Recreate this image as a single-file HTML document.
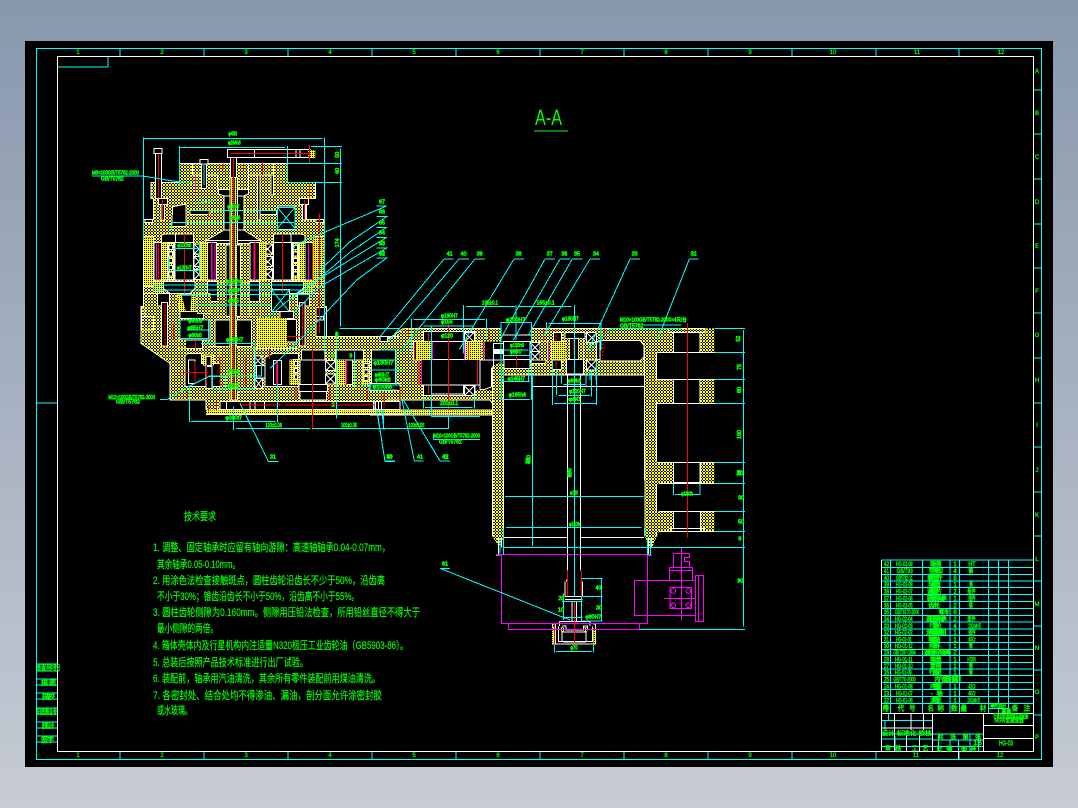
<!DOCTYPE html>
<html lang="zh"><head><meta charset="utf-8"><title>A-A</title>
<style>
html,body{margin:0;padding:0;background:#8a9aae}
body{width:1078px;height:808px;overflow:hidden;background:linear-gradient(#8898ac,#c6cbd4)}
svg{display:block;position:absolute;left:0;top:0}
text{font-family:"Liberation Sans","WenQuanYi Zen Hei","Noto Sans CJK SC",sans-serif}
</style></head><body>
<svg width="1078" height="808" viewBox="0 0 1078 808" shape-rendering="crispEdges" xmlns="http://www.w3.org/2000/svg">
<defs>
<pattern id="H" width="3" height="3" patternUnits="userSpaceOnUse"><rect width="3" height="3" fill="#000"/><rect x="0" y="0" width="1" height="1" fill="#ff0"/><rect x="1" y="1" width="1" height="1" fill="#ff0"/><rect x="2" y="2" width="1" height="1" fill="#ff0"/><rect x="1" y="2" width="1" height="1" fill="#ff0"/><rect x="2" y="1" width="1" height="1" fill="#ff0"/></pattern>
<pattern id="D" width="2" height="2" patternUnits="userSpaceOnUse"><rect width="2" height="2" fill="#ff0"/><rect width="1" height="1" fill="#000"/></pattern>
<clipPath id="cA">
<path transform="matrix(.33333333 0 0 .33333333 80 120)" d="M298,130H622V187H707V235H680V298H733V560H740V650H960V870H378V840H270V730L183,670V560H190V298H220V235H213V187H298Z"/>
<path transform="matrix(.33333333 0 0 .33333333 370 240)" d="M50,300L100,265H395V305H345V360H315V450H365V480H50V300ZM485,265H1033V338H860V720H823V405H400V360H485ZM367,380L385,368H400V720H367ZM860,418H1033V490H860ZM860,668H1033V720H860Z"/>
<path transform="matrix(.33333333 0 0 .33333333 430 440)" d="M187,0H220V290L214,315H204L187,290ZM645,0H680V100L687,68H730V130H687L680,140V215L687,214H730V274H687L680,290 668,320H655L645,290ZM812,68h41v62h-41ZM812,214h41v60h-41Z"/>
</clipPath>
<clipPath id="cD">
<path transform="matrix(.33333333 0 0 .33333333 80 120)" d="M245,368h17v112h-17ZM658,368h17v112h-17ZM264,368h18v112h-18ZM638,368h18v112h-18ZM362,368h20v112h-20ZM538,368h20v112h-20ZM222,484h28v36h-28ZM670,484h28v36h-28ZM292,525H305L318,575H300ZM335,525H345V575H330ZM370,705h8v30h-8ZM393,705h7v30h-7ZM630,720h10v74h-10ZM640,718h16v76h-16ZM533,595h87v85h-87ZM770,720h30v74h-30ZM848,720h20v74h-20ZM453,172h5v668h-5ZM464,172h5v668h-5ZM378,870h600v14h-600ZM684,90h22v24h-22ZM192,352h28v146h-28ZM700,352h30v146h-30Z"/>
<path transform="matrix(.33333333 0 0 .33333333 370 240)" d="M140,305h47v55h-47ZM288,305h45v55h-45ZM545,305h42v55h-42ZM0,510h367v15h-367Z"/>
<path transform="matrix(.33333333 0 0 .33333333 430 440)" d="M367,560h8v50h-8ZM490,565h7v45h-7ZM392,562h10v12h-10ZM462,562h10v12h-10Z"/>
</clipPath>
<clipPath id="cH">
<path transform="matrix(.33333333 0 0 .33333333 80 120)" d="M412,488h26v102h-26ZM482,488h26v102h-26ZM352,520h40v60h-40ZM510,545h30v45h-30ZM295,660h23v25h-23ZM420,680h30v135h-30ZM472,685h25v130h-25ZM497,685h25v130h-25Z"/>
<path transform="matrix(.33333333 0 0 .33333333 370 240)" d="M510,305h22v55h-22ZM585,295h13v63h-13ZM626,295h14v63h-14Z"/>
</clipPath>
<g id="xb" fill="none" stroke="#fff" stroke-width="3"><rect width="30" height="30" fill="#000"/><path d="M0,0L30,30M30,0L0,30"/></g>
<g id="rol" stroke="#fff" stroke-width="3"><rect width="18" height="112" fill="none"/><g fill="#000"><rect x="3" y="8" width="11" height="12"/><rect x="3" y="28" width="11" height="12"/><rect x="3" y="48" width="11" height="12"/><rect x="3" y="68" width="11" height="12"/><rect x="3" y="88" width="11" height="12"/></g></g>
</defs>
<rect x="25" y="41" width="1028" height="726" fill="#000"/>
<!-- frames -->
<g fill="none" stroke="#0ff">
<rect x="36.5" y="48.5" width="1005" height="711"/>
<path d="M120,48V56M204,48V56M288,48V56M372,48V56M456,48V56M540,48V56M624,48V56M708,48V56M792,48V56M876,48V56M959,48V56M120,751V759M204,751V759M288,751V759M372,751V759M456,751V759M540,751V759M624,751V759M708,751V759M792,751V759M876,751V759M959,751V759M1034,90H1042M1034,134H1042M1034,179H1042M1034,224H1042M1034,268H1042M1034,313H1042M1034,358H1042M1034,403H1042M1034,447H1042M1034,492H1042M1034,536H1042M1034,581H1042M1034,626H1042M1034,670H1042M1034,715H1042M36,403H58"/>
<path d="M58,67H108V56"/>
</g>
<rect x="57.5" y="56.5" width="976" height="695" fill="none" stroke="#fff"/>
<g font-size="6" fill="#0f0" text-anchor="middle" stroke="#0f0" stroke-width=".3">
<text x="78" y="54">1</text><text x="162" y="54">2</text><text x="246" y="54">3</text><text x="330" y="54">4</text><text x="414" y="54">5</text><text x="498" y="54">6</text><text x="582" y="54">7</text><text x="666" y="54">8</text><text x="750" y="54">9</text><text x="833" y="54">10</text><text x="917" y="54">11</text><text x="1001" y="54">12</text>
<text x="78" y="757">1</text><text x="162" y="757">2</text><text x="246" y="757">3</text><text x="330" y="757">4</text><text x="414" y="757">5</text><text x="498" y="757">6</text><text x="582" y="757">7</text><text x="666" y="757">8</text><text x="750" y="757">9</text><text x="833" y="757">10</text><text x="916" y="757">11</text><text x="1000" y="757">12</text>
<text x="1037" y="73">A</text><text x="1037" y="115">B</text><text x="1037" y="159">C</text><text x="1037" y="204">D</text><text x="1037" y="248">E</text><text x="1037" y="293">F</text><text x="1037" y="337">G</text><text x="1037" y="382">H</text><text x="1037" y="427">I</text><text x="1037" y="472">J</text><text x="1037" y="517">K</text><text x="1037" y="561">L</text><text x="1037" y="606">M</text><text x="1037" y="650">N</text><text x="1037" y="694">O</text><text x="1037" y="739">P</text>
</g>
<!-- A-A title -->
<text x="535" y="125" font-size="22" fill="#0f0" textLength="27" lengthAdjust="spacingAndGlyphs">A-A</text>
<path d="M534,131H568" stroke="#0f0" fill="none"/>

<!-- base hatch -->
<rect width="1078" height="808" fill="url(#H)" clip-path="url(#cA)"/>

<!-- Z1 black / white shapes -->
<g transform="matrix(.33333333 0 0 .33333333 80 120)">
<g fill="#000" stroke="#fff" stroke-width="3">
<path fill="none" d="M298,130H622V187H707V235H680V298H733V560H740V650H960M298,130V187H213V235H220V298H190V560H183V670L270,730V840H378V870"/>
<path fill="none" d="M338,130V165H412V208M338,165V130M505,165V208M505,165H580V130M505,130V165"/>
<rect x="222" y="85" width="24" height="15"/><rect x="226" y="100" width="18" height="135"/>
<rect x="360" y="118" width="24" height="14"/><rect x="364" y="132" width="16" height="73"/>
<rect x="442" y="88" width="248" height="24"/><path fill="none" d="M523,88V112M648,88V112M660,88V112"/>
<rect x="452" y="112" width="18" height="60"/>
<rect x="432" y="228" width="18" height="104"/><rect x="472" y="228" width="20" height="104"/>
<path d="M415,208H450V228H432L415,222Z"/><path d="M505,208H472V228H490L505,222Z"/>
<path d="M378,362L432,330H450V362Z"/><path d="M542,362L492,330H472V362Z"/>
<rect x="378" y="362" width="72" height="8"/><rect x="472" y="362" width="70" height="8"/>
<rect x="532" y="165" width="8" height="135"/><rect x="573" y="165" width="8" height="60"/>
<path d="M278,260L318,252V320H275Z"/><rect x="592" y="258" width="53" height="70"/>
<rect x="330" y="272" width="60" height="12"/><rect x="540" y="272" width="50" height="12"/>
<rect x="195" y="298" width="23" height="10"/><rect x="708" y="298" width="22" height="10"/>
<rect x="235" y="235" width="27" height="18"/><rect x="658" y="235" width="27" height="18"/>
<rect x="243" y="253" width="10" height="47"/><rect x="667" y="253" width="10" height="47"/>
<rect x="450" y="172" width="22" height="668"/>
<path fill="none" d="M190,350H220V500H190M190,520H232M728,520H688M700,350H733"/>
<g id="m1">
<path d="M245,368V345L255,342H287V368Z"/>
<rect x="222" y="368" width="23" height="112"/>
<rect x="245" y="368" width="17" height="112"/>
<rect x="264" y="368" width="18" height="112"/>
<rect x="285" y="368" width="55" height="112"/><rect x="287" y="342" width="53" height="26"/>
<use href="#xb" x="342" y="372"/><use href="#xb" x="342" y="410"/><use href="#xb" x="342" y="448"/>
<rect x="362" y="368" width="20" height="112"/>
<rect x="382" y="368" width="28" height="112"/>
<rect x="438" y="375" width="12" height="215"/>
<path d="M250,484H345V505L330,520H270L250,505Z"/>
<rect x="382" y="484" width="30" height="60"/>
<rect x="222" y="484" width="28" height="36"/>
<rect x="232" y="520" width="36" height="38"/>
<rect x="245" y="548" width="17" height="130"/>
<rect x="412" y="488" width="26" height="102"/>
<rect x="405" y="600" width="45" height="80"/>
</g>
<use href="#m1" transform="translate(920,0) scale(-1,1)"/>
<path fill="none" d="M185,562V630H220V590H195V562M185,590H220"/>
<rect x="708" y="562" width="32" height="88"/><path fill="none" d="M708,590H730V600H708"/>
<path d="M292,525H345V575H330L318,575 300,575Z"/>
<rect x="300" y="575" width="70" height="20"/>
<rect x="352" y="520" width="40" height="60"/>
<rect x="575" y="508" width="53" height="66"/>
<rect x="600" y="575" width="40" height="20"/>
<rect x="533" y="595" width="87" height="85"/>
<rect x="620" y="598" width="30" height="68"/>
<rect x="510" y="545" width="30" height="45"/>
<rect x="300" y="600" width="90" height="60"/>
<rect x="295" y="660" width="72" height="25"/>
<path fill="none" d="M385,680H450M472,685H655"/>
<path d="M315,800V712Q315,700 330,700H365V730H420V800Z"/>
<rect x="325" y="720" width="20" height="70"/>
<rect x="370" y="705" width="30" height="30"/><rect x="378" y="710" width="15" height="26"/>
<rect x="378" y="740" width="18" height="65"/>
<rect x="420" y="680" width="30" height="135"/>
<rect x="472" y="685" width="25" height="130"/>
<rect x="497" y="685" width="25" height="130"/>
<rect x="522" y="708" width="24" height="28"/><path fill="none" d="M522,708L546,736M546,708L522,736"/>
<rect x="530" y="736" width="25" height="38"/>
<rect x="525" y="776" width="22" height="30"/><path fill="none" d="M525,776L547,806M547,776L525,806"/>
<path d="M555,800V712L580,700H655V800Z"/>
<rect x="580" y="722" width="25" height="72"/>
<rect x="630" y="720" width="10" height="74"/>
<rect x="640" y="718" width="16" height="76"/>
<rect x="660" y="720" width="78" height="74"/><rect x="665" y="690" width="70" height="30"/>
<rect x="657" y="794" width="85" height="21"/><rect x="660" y="815" width="80" height="25"/>
<use href="#xb" x="737" y="722"/><use href="#xb" x="737" y="762"/>
<rect x="766" y="690" width="84" height="30"/><rect x="770" y="720" width="30" height="74"/><rect x="800" y="720" width="18" height="74"/>
<rect x="848" y="720" width="20" height="74"/>
<rect x="875" y="690" width="72" height="100"/>
<rect x="870" y="790" width="90" height="22"/>
<rect x="420" y="845" width="465" height="24"/>
<rect x="887" y="845" width="73" height="24"/>
<path fill="none" d="M440,845V869M510,845V869M525,845V869M553,845V869M880,845V869M895,845V869M905,845V869"/>
<rect x="900" y="650" width="22" height="14"/>
<path fill="none" d="M380,858V880M412,858V875"/>
</g>
</g>

<!-- Z2 black / white shapes -->
<g transform="matrix(.33333333 0 0 .33333333 370 240)">
<g fill="#000" stroke="#fff" stroke-width="3">
<path fill="none" d="M105,265H395M485,265H1005V277H895V265M397,285H485M397,305H485M50,300L100,265"/>
<rect x="160" y="275" width="155" height="32"/>
<use href="#xb" x="283" y="277"/>
<rect x="130" y="305" width="10" height="55"/>
<rect x="140" y="305" width="47" height="55"/>
<rect x="187" y="305" width="98" height="55"/>
<rect x="288" y="305" width="45" height="55"/>
<rect x="155" y="358" width="175" height="77"/>
<rect x="160" y="435" width="155" height="32"/>
<rect x="185" y="435" width="95" height="27"/>
<use href="#xb" x="283" y="437"/>
<path d="M330,360H370V380L365,385V440L345,448H330Z"/>
<rect x="370" y="310" width="30" height="50"/>
<rect x="373" y="328" width="24" height="12" fill="#fff"/>
<rect x="400" y="305" width="80" height="53"/>
<rect x="402" y="358" width="78" height="27"/>
<use href="#xb" x="480" y="308"/><use href="#xb" x="480" y="335"/>
<rect x="510" y="305" width="22" height="55"/>
<rect x="545" y="305" width="42" height="55"/>
<rect x="550" y="278" width="25" height="27"/>
<rect x="547" y="360" width="28" height="28"/>
<rect x="585" y="278" width="60" height="18"/>
<rect x="585" y="295" width="55" height="63"/><rect x="598" y="295" width="28" height="63"/>
<rect x="590" y="358" width="50" height="44"/>
<use href="#xb" x="650" y="278"/><use href="#xb" x="650" y="360"/>
<rect x="680" y="305" width="12" height="53"/>
<path d="M690,302H810L822,315V350L810,363H690Z"/>
<rect x="910" y="277" width="80" height="60"/>
<rect x="910" y="418" width="80" height="72"/>
<rect x="910" y="668" width="80" height="60"/>
<path fill="none" d="M860,338V425M860,485V665M860,338H1033M860,418H1033M860,490H1033M860,668H1033M823,320V720M400,380V720M367,380V720"/>
<path fill="none" d="M400,405H825M485,440H825M592,405V720M632,405V720M485,405V440"/>
<path fill="none" d="M50,480H360L367,490"/>
<path d="M485,360L530,360L525,370H485Z"/>
</g>
</g>

<!-- Z3 white shapes -->
<g transform="matrix(.33333333 0 0 .33333333 430 440)">
<g fill="none" stroke="#fff" stroke-width="3">
<path d="M187,0V290M220,0V290M645,0V290M680,0V65M680,135V215M680,275V290"/>
<path d="M687,68H853M687,130H853M730,68V130M812,68V130M687,214H853M715,265H825M687,274H853M730,214V265M812,214V274"/>
<path d="M222,292H412M452,292H642M222,322H412M452,322H642"/>
<path d="M412,0V392M452,0V392M405,425V470M458,425V470M410,418V425M455,420V425"/>
<path d="M405,470H458M405,478H458M418,485H447M426,485V545M440,485V545"/>
<path d="M205,292V345M214,292V322M198,345H212M655,292V345M664,292V322M650,345H664"/>
<path d="M388,545H480V558M388,545V558M376,552V612H497V552M386,560V605H488V560M396,572V605M468,572V605M396,576H468M400,606H468M396,558H408V570H460V558H472V570M490,552H497M376,552H368V612H376"/>
</g>
</g>

<!-- overlay hatching -->
<rect width="1078" height="808" fill="url(#H)" clip-path="url(#cH)"/>
<rect width="1078" height="808" fill="url(#D)" clip-path="url(#cD)"/>

<!-- Z1 lines -->
<g transform="matrix(.33333333 0 0 .33333333 80 120)">
<use href="#rol" x="264" y="368"/><use href="#rol" x="638" y="368"/>
<g fill="#000" stroke="#fff" stroke-width="3"><rect x="644" y="725" width="9" height="12"/><rect x="644" y="745" width="9" height="12"/><rect x="644" y="765" width="9" height="12"/><rect x="852" y="730" width="12" height="12"/><rect x="852" y="750" width="12" height="12"/><rect x="852" y="770" width="12" height="12"/></g>
<path d="M378,870H980M378,884H980" stroke="#fff" stroke-width="3" fill="none"/>
<g stroke="#f00" stroke-width="3" fill="none">
<path d="M236,100V235M248,240V300M452,100H690M689,75V128M385,268V292M689,185V235M673,240V295M372,140V130M429,130V148M491,130V148M548,128V165M537,170V180M460,112V840M313,340V520M395,365V480M525,365V480M235,370V480M607,340V520M697,370V480M718,280V640M255,548V678M667,548V678M280,610V660M620,650H680M347,660V690M568,685V715M420,710V800M497,710V800M302,757H385M380,735V790M345,725V790M590,722V795M697,680V930M648,800V840M748,800V840M862,800V840M800,720V795M617,855H885M483,855H605M912,815V865M410,845V870M385,855V875M322,815V835"/>
</g>
<g stroke="#f0f" stroke-width="3" fill="none">
<path d="M346,165V225M229,370V480M396,370V480M405,370V480M522,370V480M685,370V480M592,722V795M798,720V795"/>
</g>
<g stroke="#0ff" stroke-width="3" fill="none">
<path d="M190,52V360M733,52V700M190,55H727M298,78V200M298,82H615M622,78V187M693,79H786M622,130H786M622,187H786M781,85V620M778,625H960M770,635V895"/>
<path d="M36,168H188L213,172 272,182 345,192M372,132V195"/>
<path d="M240,838H262L325,800 385,770 520,767M328,800V908M333,904H587M592,790V908M460,860V930M468,925H692M697,925H960"/>
<path d="M480,850L565,1024H596M890,865L915,1024H945M905,870L912,930"/>
<path d="M330,272H590M275,308H645V328M275,308V330M278,385H355M278,452H355M265,410V450M358,372V470M220,495H700M222,510H700M300,523H690M345,555H575M300,600H385V655H300Z M320,630H388M363,670H525V795M385,665V675M400,805H525M397,770V805M385,768H545V730M437,770V808M592,262V330H645V262Z M592,262L645,325M645,262L592,325M575,510L628,575M628,510L575,575M410,240L345,250"/>
<path d="M890,258H920L650,372 640,385M890,290H920L810,365 700,470M890,322H920L812,395 700,490M890,352H920L720,475 620,545 560,595M890,384H920L720,500 640,580M890,414H920L830,480 670,650 570,745"/>
<path d="M824,695V805M845,795H960M868,790V810"/>
</g>
<g font-size="16" fill="#0f0" stroke="#0f0" stroke-width="2" text-anchor="start">
<text x="445" y="47" textLength="26" lengthAdjust="spacingAndGlyphs">φ450</text>
<text x="444" y="74" textLength="38" lengthAdjust="spacingAndGlyphs">φ264h8</text>
<text x="442" y="265" textLength="36" lengthAdjust="spacingAndGlyphs">φ140H7</text>
<text x="447" y="299" textLength="34" lengthAdjust="spacingAndGlyphs">φ80g6</text>
<text x="292" y="381" textLength="42" lengthAdjust="spacingAndGlyphs">φ100h6</text>
<text x="291" y="449" textLength="44" lengthAdjust="spacingAndGlyphs">φ130H7</text>
<text x="438" y="489" textLength="48" lengthAdjust="spacingAndGlyphs">φ120h6</text>
<text x="444" y="517" textLength="35" lengthAdjust="spacingAndGlyphs">φ90h7</text>
<text x="444" y="548" textLength="33" lengthAdjust="spacingAndGlyphs">φ85</text>
<text x="325" y="607" textLength="42" lengthAdjust="spacingAndGlyphs">φ90h6</text>
<text x="322" y="628" textLength="48" lengthAdjust="spacingAndGlyphs">φ85H7</text>
<text x="325" y="651" textLength="40" lengthAdjust="spacingAndGlyphs">φ80k6</text>
<text x="438" y="665" textLength="52" lengthAdjust="spacingAndGlyphs">φ125H7</text>
<text x="442" y="760" textLength="36" lengthAdjust="spacingAndGlyphs">φ70h6</text>
<text x="442" y="802" textLength="36" lengthAdjust="spacingAndGlyphs">φ80H7</text>
<text x="436" y="899" textLength="50" lengthAdjust="spacingAndGlyphs">φ300f7</text>
<text x="556" y="921" textLength="50" lengthAdjust="spacingAndGlyphs">120±0.06</text>
<text x="783" y="921" textLength="48" lengthAdjust="spacingAndGlyphs">100±0.05</text>
<text x="36" y="163" textLength="141" lengthAdjust="spacingAndGlyphs">M8×100GB/T5782-2000</text>
<text x="63" y="181" textLength="68" lengthAdjust="spacingAndGlyphs">GB/T5782</text>
<text x="85" y="837" textLength="140" lengthAdjust="spacingAndGlyphs">M12×100GB/T5782-2000</text>
<text x="108" y="851" textLength="72" lengthAdjust="spacingAndGlyphs">GB/T5782</text>
<text x="570" y="1016">31</text><text x="919" y="1016">30</text>
<text x="897" y="250">67</text><text x="897" y="280">66</text><text x="897" y="313">65</text><text x="897" y="343">64</text><text x="897" y="375">63</text><text x="897" y="405">62</text>
<text x="755" y="860">2</text>
<text x="765" y="650" font-size="20">8</text>
<text x="755" y="713">9</text><text x="808" y="713">9</text>
<text transform="translate(777,113) rotate(-90)">50</text>
<text transform="translate(777,162) rotate(-90)">40</text>
<text transform="translate(777,382) rotate(-90)">174</text>
</g>
</g>

<!-- Z2 lines -->
<g transform="matrix(.33333333 0 0 .33333333 370 240)">
<path d="M0,510H367M0,525H367" stroke="#fff" stroke-width="3" fill="none"/>
<g stroke="#f00" stroke-width="3" fill="none">
<path d="M235,250V510M175,278V305M175,437V462M133,308V356M115,265V295M355,265V298M440,305V380M295,308V360M322,362V432M147,360V435M522,265V298M558,280V305M558,360V385M612,295V345M703,265V298M952,250V720M90,440V485"/>
</g>
<g stroke="#f0f" stroke-width="3" fill="none"><path d="M187,308V358M283,308V358M342,305V360M535,305V358M155,360V435"/></g>
<g stroke="#f00" stroke-width="5" fill="none" stroke-dasharray="5 6"><path d="M698,310V356"/></g>
<g stroke="#0ff" stroke-width="3" fill="none">
<path d="M222,57H250M222,57L30,290M267,57H297M267,57L50,310M315,57H345M315,57L90,335M432,57H462M432,57L268,328M525,57H555M525,57L390,300M570,57H600M570,57L430,300M607,57H638M607,57L475,285M660,57H690M660,57L520,290M780,57H810M780,57L655,330M958,57H985M958,57L862,300"/>
<path d="M280,195V340M288,199H435M445,199H605M613,195V720M125,235V340M130,238H345M350,235V300M160,258H310M184,260V530M184,530H330M392,248H485M393,248V480M485,248V480M530,248V280M535,250H693M693,248V330M438,195V300M488,400V720M400,330H475M400,347H480M395,425H480M395,478H480M400,385V425M476,385V425M160,470V505M313,465V505M165,502H308"/>
<path d="M548,360V495M552,490H680M680,360V495M560,390V465M565,466H660M665,388V470M575,400V430M580,433H645M648,395V440M660,395V420M678,370V420"/>
<path d="M-10,450H80M0,390H105M30,330H78V435H5M78,360H5"/>
<path d="M20,510L45,663H75M95,475L133,663H160M100,480L210,663H240M40,510V565M50,565H235V525M0,565H35"/>
<path d="M725,265L660,330M725,265H935M820,255H935M1033,265H1125M1033,337H1125M1033,418H1125M1033,490H1125M1033,667H1125M1120,270V720M190,598H330M190,580V598"/>
</g>
<g font-size="16" fill="#0f0" stroke="#0f0" stroke-width="2">
<text x="27" y="15">63</text><text x="27" y="47">32</text>
<text x="230" y="47">41</text><text x="272" y="47">40</text><text x="320" y="47">39</text><text x="437" y="47">38</text><text x="530" y="47">37</text><text x="574" y="47">36</text><text x="612" y="47">35</text><text x="669" y="47">34</text><text x="785" y="47">33</text><text x="962" y="47">32</text>
<text x="336" y="194" textLength="48" lengthAdjust="spacingAndGlyphs">165±0.1</text>
<text x="500" y="194" textLength="54" lengthAdjust="spacingAndGlyphs">165±0.1</text>
<text x="213" y="232" textLength="50" lengthAdjust="spacingAndGlyphs">φ190H7</text>
<text x="213" y="250" textLength="35" lengthAdjust="spacingAndGlyphs">φ155</text>
<text x="408" y="245" textLength="58" lengthAdjust="spacingAndGlyphs">φ200H7</text>
<text x="576" y="242" textLength="50" lengthAdjust="spacingAndGlyphs">φ160H7</text>
<text x="213" y="293" textLength="36" lengthAdjust="spacingAndGlyphs">φ120</text>
<text x="420" y="321" textLength="42" lengthAdjust="spacingAndGlyphs">φ110h6</text>
<text x="420" y="341" textLength="36" lengthAdjust="spacingAndGlyphs">φ95h7</text>
<text x="10" y="374" textLength="60" lengthAdjust="spacingAndGlyphs">φ130H7</text>
<text x="14" y="410" textLength="44" lengthAdjust="spacingAndGlyphs">φ90H7</text>
<text x="14" y="425" textLength="48" lengthAdjust="spacingAndGlyphs">φ80k6</text>
<text x="8" y="445" textLength="58" lengthAdjust="spacingAndGlyphs">φ100h6</text>
<text x="413" y="421" textLength="52" lengthAdjust="spacingAndGlyphs">φ145H7</text>
<text x="416" y="470" textLength="52" lengthAdjust="spacingAndGlyphs">φ165h6</text>
<text x="593" y="428" textLength="40" lengthAdjust="spacingAndGlyphs">φ80h6</text>
<text x="597" y="459" textLength="50" lengthAdjust="spacingAndGlyphs">φ100H7</text>
<text x="595" y="483" textLength="36" lengthAdjust="spacingAndGlyphs">φ90</text>
<text x="210" y="495" textLength="55" lengthAdjust="spacingAndGlyphs">200±0.1</text>
<text x="115" y="561" textLength="48" lengthAdjust="spacingAndGlyphs">100±0.05</text>
<text x="190" y="593" textLength="140" lengthAdjust="spacingAndGlyphs">M10×100GB/T5782-2000</text>
<text x="207" y="610" textLength="68" lengthAdjust="spacingAndGlyphs">GB/T5782</text>
<text x="750" y="245" textLength="200" lengthAdjust="spacingAndGlyphs">M10×100GB/T5782-2000×4只/台</text>
<text x="750" y="262" textLength="70" lengthAdjust="spacingAndGlyphs">GB/T5782</text>
<text x="50" y="655">40</text><text x="141" y="655">41</text><text x="218" y="655">42</text>
<text transform="translate(1110,305) rotate(-90)">52</text>
<text transform="translate(1113,390) rotate(-90)">75</text>
<text transform="translate(1113,459) rotate(-90)">80</text>
<text transform="translate(1113,597) rotate(-90)">160</text>
<text transform="translate(1113,708) rotate(-90)">70</text>
<text transform="translate(482,672) rotate(-90)">400</text>
<text transform="translate(605,712) rotate(-90)">300</text>
</g>
</g>

<!-- Z3 lines -->
<g transform="matrix(.33333333 0 0 .33333333 430 440)">
<g stroke="#f00" stroke-width="3" fill="none"><path d="M772,0V292M412,393V470M455,393V470M433,485V610M373,548V612"/></g>
<g stroke="#f0f" stroke-width="3" fill="none">
<path d="M200,343H664M214,343V550H652V343M236,550V568H628V550M613,421H797V527H613ZM797,406H821V545H797ZM805,406V545M718,421V383H788V421M718,391H788M730,383V340H778V352H763V365H778V383M754,323V542M720,443H785V505H720ZM702,475H797"/>
<circle cx="730" cy="453" r="7"/><circle cx="775" cy="453" r="7"/><circle cx="730" cy="496" r="7"/><circle cx="775" cy="496" r="7"/>
</g>
<g stroke="#0ff" stroke-width="3" fill="none">
<path d="M225,169H640M228,262H635M220,322H945M307,0V318M433,0V470M940,0V560M628,568H945M853,68H945M853,130H945M853,214H945M853,274H945M730,130V165M810,130V165M735,163H810M455,415H518M455,469H518M455,543H518M515,415V543M400,460V540M396,485H458M455,470V543M400,532H458M373,615V638M490,615V638M378,634H485M30,385H60M30,385L420,540M30,63H60M0,12L30,63M220,265V345M643,265V290M652,295V345M662,295V345M210,295V340"/>
</g>
<g font-size="16" fill="#0f0" stroke="#0f0" stroke-width="2">
<text x="420" y="164" textLength="24" lengthAdjust="spacingAndGlyphs">φ140</text>
<text x="417" y="258" textLength="33" lengthAdjust="spacingAndGlyphs">φ150h</text>
<text x="753" y="166" textLength="36" lengthAdjust="spacingAndGlyphs">φ180h</text>
<text x="36" y="56">41</text><text x="36" y="376">61</text>
<text x="496" y="449">40</text><text x="498" y="508">30</text>
<text x="385" y="480">20</text><text x="384" y="515">10</text>
<text x="466" y="536" textLength="48" lengthAdjust="spacingAndGlyphs">φ80H7</text>
<text x="421" y="628" textLength="22" lengthAdjust="spacingAndGlyphs">φ70</text>
<text transform="translate(299,72) rotate(-90)">32</text>
<text transform="translate(424,112) rotate(-90)">450</text>
<text x="922" y="105">60</text><text x="924" y="178">30</text><text x="924" y="250">50</text><text x="925" y="302">8</text><text x="922" y="428">90</text>
</g>
</g>

<!-- Technical requirements -->
<g fill="#0f0" stroke="#0f0" stroke-width=".2" font-size="11">
<text x="184" y="520" textLength="32" lengthAdjust="spacingAndGlyphs">技术要求</text>
<text x="153" y="551" textLength="237" lengthAdjust="spacingAndGlyphs">1. 调整、固定轴承时应留有轴向游隙：高速轴轴承0.04-0.07mm，</text>
<text x="157" y="568" textLength="83" lengthAdjust="spacingAndGlyphs">其余轴承0.05-0.10mm。</text>
<text x="153" y="584" textLength="232" lengthAdjust="spacingAndGlyphs">2. 用涂色法检查接触斑点，圆柱齿轮沿齿长不少于50%，沿齿高</text>
<text x="157" y="600" textLength="202" lengthAdjust="spacingAndGlyphs">不小于30%；锥齿沿齿长不小于50%，沿齿高不小于55%。</text>
<text x="153" y="616" textLength="267" lengthAdjust="spacingAndGlyphs">3. 圆柱齿轮侧隙为0.160mm。侧隙用压铅法检查，所用铅丝直径不得大于</text>
<text x="157" y="632" textLength="61" lengthAdjust="spacingAndGlyphs">最小侧隙的两倍。</text>
<text x="153" y="649" textLength="255" lengthAdjust="spacingAndGlyphs">4. 箱体壳体内及行星机构内注适量N320极压工业齿轮油（GB5903-86）。</text>
<text x="153" y="666" textLength="155" lengthAdjust="spacingAndGlyphs">5. 总装后按照产品技术标准进行出厂试验。</text>
<text x="153" y="682" textLength="227" lengthAdjust="spacingAndGlyphs">6. 装配前，轴承用汽油清洗，其余所有零件装配前用煤油清洗。</text>
<text x="153" y="699" textLength="229" lengthAdjust="spacingAndGlyphs">7. 各密封处、结合处均不得渗油、漏油，剖分面允许涂密封胶</text>
<text x="157" y="714" textLength="35" lengthAdjust="spacingAndGlyphs">或水玻璃。</text>
</g>

<!-- Left bottom table -->
<g stroke="#0ff" fill="none"><path d="M36,664H57M36,671H57M36,679H57M36,685H57M36,693H57M36,699H57M36,708H57M36,714H57M36,722H57M36,728H57M36,736H57M36,742H57"/></g>
<g font-size="7" fill="#0f0" stroke="#0f0" stroke-width=".5">
<text x="37" y="670" textLength="23" lengthAdjust="spacingAndGlyphs">借(通)用件登记</text>
<text x="41" y="685" textLength="15" lengthAdjust="spacing">描图</text>
<text x="42" y="699" textLength="13" lengthAdjust="spacing">描校</text>
<text x="37" y="714" textLength="20" lengthAdjust="spacingAndGlyphs">旧底图总号</text>
<text x="42" y="728" textLength="12" lengthAdjust="spacingAndGlyphs">底图总号</text>
<text x="41" y="742" textLength="13" lengthAdjust="spacing">签字</text>
</g>

<!-- BOM -->
<g transform="matrix(.33333333 0 0 .33333333 875 555)">
<g stroke="#0ff" stroke-width="3" fill="none">
<path d="M20,15H476M20,37H476M20,58H476M20,78H476M20,98H476M20,118H476M20,140H476M20,160H476M20,181H476M20,201H476M20,222H476M20,242H476M20,262H476M20,283H476M20,302H476M20,322H476M20,342H476M20,362H476M20,382H476M20,403H476M20,424H476M20,445H476"/>
<path d="M46,15V475M142,15V475M225,15V475M253,15V475M340,15V475M370,15V445M400,15V445M370,460V475M400,445V475M340,460H400"/>
<path d="M20,497H172M20,537H172M20,552H172M20,575H172M173,537H325M173,555H325M173,575H325M190,537V590M225,555V590M250,555V590M285,537V590M310,537V590M40,475V497M30,497V525M60,545V590"/>
</g>
<g stroke="#fff" stroke-width="3" fill="none">
<path d="M20,15V590M20,475H476M20,519H172M172,475V590M325,475V590M325,512H476M325,550H476M58,475V590M108,475V525M145,475V525M95,540V590M133,540V590"/>
<path d="M250,590V614"/>
</g>
<g font-size="18" fill="#0f0" stroke="#0f0" stroke-width="1.3">
<g><text x="27" y="33" textLength="15" lengthAdjust="spacingAndGlyphs">42</text><text x="63" y="33" textLength="50" lengthAdjust="spacingAndGlyphs">HG-02-09</text><text x="165" y="33" textLength="35" lengthAdjust="spacing">端盖</text><text x="235" y="33">1</text><text x="280" y="33" textLength="22" lengthAdjust="spacingAndGlyphs">HT</text></g>
<g><text x="27" y="54" textLength="15" lengthAdjust="spacingAndGlyphs">41</text><text x="65" y="54" textLength="48" lengthAdjust="spacingAndGlyphs">GB/T93</text><text x="162" y="54" textLength="43" lengthAdjust="spacing">垫圈12</text><text x="235" y="54">4</text><text x="280" y="54" textLength="14" lengthAdjust="spacingAndGlyphs">钢</text></g>
<g><text x="27" y="75" textLength="15" lengthAdjust="spacingAndGlyphs">40</text><text x="63" y="75" textLength="50" lengthAdjust="spacingAndGlyphs">GB5782-11</text><text x="157" y="75" textLength="46" lengthAdjust="spacing">螺栓组件</text><text x="235" y="75">8</text></g>
<g><text x="27" y="95" textLength="15" lengthAdjust="spacingAndGlyphs">39</text><text x="63" y="95" textLength="50" lengthAdjust="spacingAndGlyphs">HG-02-08</text><text x="160" y="95" textLength="37" lengthAdjust="spacing">轴承盖</text><text x="235" y="95">1</text><text x="283" y="95" textLength="10" lengthAdjust="spacingAndGlyphs">钢</text></g>
<g><text x="27" y="115" textLength="15" lengthAdjust="spacingAndGlyphs">38</text><text x="63" y="115" textLength="50" lengthAdjust="spacingAndGlyphs">HG-02-07</text><text x="156" y="115" textLength="45" lengthAdjust="spacing">调整垫片</text><text x="235" y="115">2</text><text x="277" y="115" textLength="25" lengthAdjust="spacingAndGlyphs">组件</text></g>
<g><text x="27" y="136" textLength="15" lengthAdjust="spacingAndGlyphs">37</text><text x="63" y="136" textLength="50" lengthAdjust="spacingAndGlyphs">HG-02-06</text><text x="156" y="136" textLength="60" lengthAdjust="spacing">圆锥滚子轴承</text><text x="235" y="136">1</text><text x="280" y="136" textLength="22" lengthAdjust="spacingAndGlyphs">组件</text></g>
<g><text x="27" y="157" textLength="15" lengthAdjust="spacingAndGlyphs">36</text><text x="63" y="157" textLength="50" lengthAdjust="spacingAndGlyphs">HG-02-05</text><text x="160" y="157" textLength="35" lengthAdjust="spacing">齿 轮</text><text x="235" y="157">2</text><text x="282" y="157" textLength="11" lengthAdjust="spacingAndGlyphs">钢</text></g>
<g><text x="27" y="177" textLength="15" lengthAdjust="spacingAndGlyphs">35</text><text x="60" y="177" textLength="72" lengthAdjust="spacingAndGlyphs">GB/T6170-2000</text><text x="192" y="177" textLength="30" lengthAdjust="spacingAndGlyphs">螺母</text><text x="235" y="177">8</text></g>
<g><text x="27" y="198" textLength="15" lengthAdjust="spacingAndGlyphs">34</text><text x="60" y="198" textLength="53" lengthAdjust="spacingAndGlyphs">HG-02-04</text><text x="154" y="198" textLength="62" lengthAdjust="spacing">圆柱滚子轴承</text><text x="235" y="198">2</text><text x="277" y="198" textLength="25" lengthAdjust="spacingAndGlyphs">组件</text></g>
<g><text x="27" y="219" textLength="15" lengthAdjust="spacingAndGlyphs">33</text><text x="60" y="219" textLength="53" lengthAdjust="spacingAndGlyphs">HG-02-03</text><text x="163" y="219" textLength="37" lengthAdjust="spacing">行星轮</text><text x="235" y="219">4</text><text x="280" y="219" textLength="38" lengthAdjust="spacingAndGlyphs">20CrMnTi</text></g>
<g><text x="27" y="239" textLength="15" lengthAdjust="spacingAndGlyphs">32</text><text x="60" y="239" textLength="53" lengthAdjust="spacingAndGlyphs">HG-02-02</text><text x="153" y="239" textLength="62" lengthAdjust="spacing">深沟球轴承组</text><text x="235" y="239">1</text><text x="280" y="239" textLength="22" lengthAdjust="spacingAndGlyphs">组件</text></g>
<g><text x="27" y="259" textLength="15" lengthAdjust="spacingAndGlyphs">31</text><text x="63" y="259" textLength="47" lengthAdjust="spacingAndGlyphs">HG-02-01</text><text x="160" y="259" textLength="36" lengthAdjust="spacing">输出轴</text><text x="235" y="259">1</text><text x="280" y="259" textLength="22" lengthAdjust="spacingAndGlyphs">40Cr</text></g>
<g><text x="27" y="279" textLength="15" lengthAdjust="spacingAndGlyphs">30</text><text x="60" y="279" textLength="53" lengthAdjust="spacingAndGlyphs">HG-01-12</text><text x="162" y="279" textLength="35" lengthAdjust="spacing">挡油环</text><text x="235" y="279">1</text><text x="282" y="279" textLength="11" lengthAdjust="spacingAndGlyphs">钢</text></g>
<g><text x="27" y="299" textLength="15" lengthAdjust="spacingAndGlyphs">29</text><text x="55" y="299" textLength="67" lengthAdjust="spacingAndGlyphs">GB/T297-1994</text><text x="148" y="299" textLength="80" lengthAdjust="spacing">圆锥滚子轴承30</text><text x="235" y="299">2</text></g>
<g><text x="27" y="319" textLength="15" lengthAdjust="spacingAndGlyphs">28</text><text x="60" y="319" textLength="53" lengthAdjust="spacingAndGlyphs">HG-01-11</text><text x="165" y="319" textLength="35" lengthAdjust="spacing">端 盖</text><text x="235" y="319">1</text><text x="277" y="319" textLength="25" lengthAdjust="spacingAndGlyphs">HT200</text></g>
<g><text x="27" y="339" textLength="15" lengthAdjust="spacingAndGlyphs">27</text><text x="60" y="339" textLength="53" lengthAdjust="spacingAndGlyphs">HG-01-10</text><text x="165" y="339" textLength="35" lengthAdjust="spacing">套 筒</text><text x="235" y="339">1</text><text x="282" y="339" textLength="11" lengthAdjust="spacingAndGlyphs">钢</text></g>
<g><text x="27" y="359" textLength="15" lengthAdjust="spacingAndGlyphs">26</text><text x="60" y="359" textLength="50" lengthAdjust="spacingAndGlyphs">HG-01-09</text><text x="162" y="359" textLength="38" lengthAdjust="spacing">行星架</text><text x="235" y="359">1</text><text x="282" y="359" textLength="11" lengthAdjust="spacingAndGlyphs">钢</text></g>
<g><text x="27" y="379" textLength="15" lengthAdjust="spacingAndGlyphs">25</text><text x="55" y="379" textLength="67" lengthAdjust="spacingAndGlyphs">GB/T70-2000</text><text x="178" y="379" textLength="82" lengthAdjust="spacing">内六角圆柱螺钉</text></g>
<g><text x="27" y="400" textLength="15" lengthAdjust="spacingAndGlyphs">24</text><text x="60" y="400" textLength="53" lengthAdjust="spacingAndGlyphs">HG-01-08</text><text x="165" y="400" textLength="35" lengthAdjust="spacing">内齿圈</text><text x="235" y="400">1</text><text x="280" y="400" textLength="22" lengthAdjust="spacingAndGlyphs">42Cr</text></g>
<g><text x="27" y="421" textLength="15" lengthAdjust="spacingAndGlyphs">23</text><text x="63" y="421" textLength="50" lengthAdjust="spacingAndGlyphs">HG-01-07</text><text x="168" y="421" textLength="35" lengthAdjust="spacing">- 轴</text><text x="235" y="421">1</text><text x="280" y="421" textLength="22" lengthAdjust="spacingAndGlyphs">40Cr</text></g>
<g><text x="27" y="442" textLength="15" lengthAdjust="spacingAndGlyphs">22</text><text x="63" y="442" textLength="50" lengthAdjust="spacingAndGlyphs">HG-01-06</text><text x="165" y="442" textLength="35" lengthAdjust="spacing">太阳轮</text><text x="235" y="442">1</text><text x="277" y="442" textLength="38" lengthAdjust="spacingAndGlyphs">20CrMnTi</text></g>
<g font-size="20">
<text x="22" y="466" textLength="22" lengthAdjust="spacing">序号</text>
<text x="68" y="466" textLength="54" lengthAdjust="spacing">代 号</text>
<text x="157" y="466" textLength="50" lengthAdjust="spacing">名 称</text>
<text x="228" y="466" textLength="48" lengthAdjust="spacing">数量</text>
<text x="314" y="466" textLength="14">材</text>
<text x="345" y="458" font-size="14" textLength="50" lengthAdjust="spacing">单件总计</text>
<text x="380" y="472" font-size="14">重量</text>
<text x="410" y="466" textLength="56" lengthAdjust="spacing">备 注</text>
</g>
<text x="355" y="490" textLength="105" lengthAdjust="spacingAndGlyphs">行星齿轮减速器总装配图</text>
<text x="358" y="503" textLength="88" lengthAdjust="spacingAndGlyphs">NGW型减速器</text>
<text x="372" y="571" font-size="22" textLength="42" lengthAdjust="spacingAndGlyphs">HG-03</text>
<text x="20" y="542" textLength="150" lengthAdjust="spacingAndGlyphs">设计 标准化 校核</text>
<text x="30" y="587" textLength="130" lengthAdjust="spacing">审核 工艺</text>
<text x="188" y="552" textLength="130" lengthAdjust="spacing">共 张 第 张</text>
<text x="296" y="570">1:5</text>
<text x="185" y="588" textLength="120" lengthAdjust="spacing">比例 图样</text>
</g>
</g>
</svg>
</body></html>
